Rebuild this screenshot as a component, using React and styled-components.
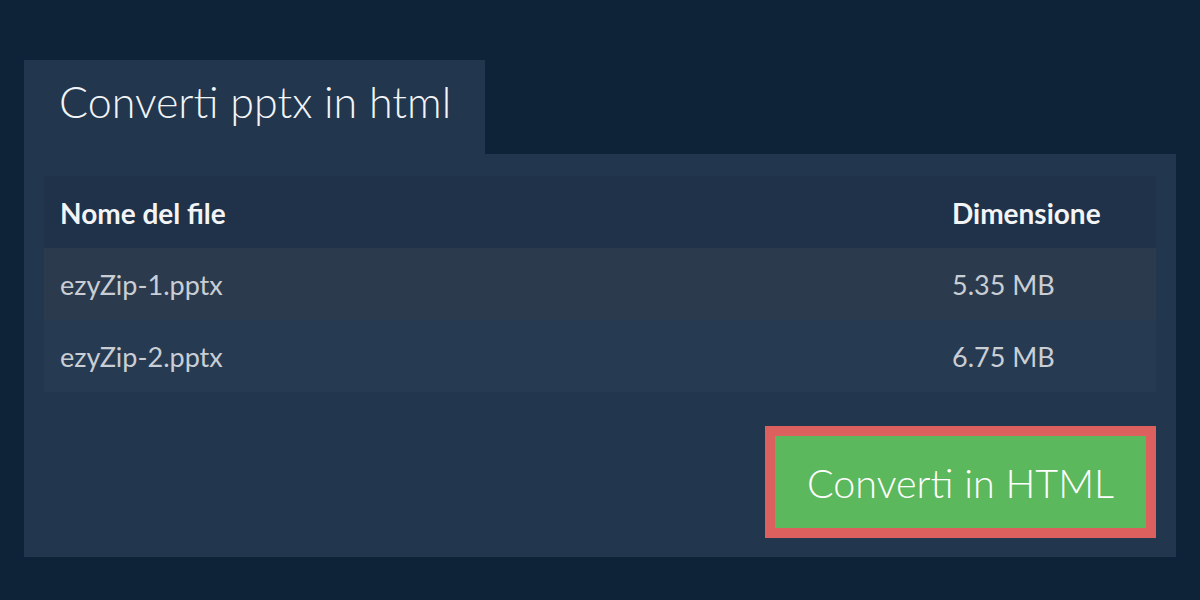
import React from 'react';
import styled, { createGlobalStyle } from 'styled-components';

const GlobalStyle = createGlobalStyle`
  html, body {
    margin: 0;
    padding: 0;
    background: #0f2338;
    font-family: Lato, "Open Sans", "Liberation Sans", sans-serif;
  }
  * {
    box-sizing: border-box;
  }
`;

const Page = styled.div`
  width: 1200px;
  height: 600px;
  padding: 60px 24px 0;
  background: #0f2338;
`;

const Tab = styled.div`
  width: 461px;
  height: 94px;
  padding: 15px 0 0 35px;
  background: #22364e;
  color: #f2f4f6;
  font-size: 43px;
  font-weight: 300;
  line-height: 54px;
  white-space: nowrap;
`;

const Panel = styled.div`
  display: flex;
  flex-direction: column;
  align-items: flex-end;
  gap: 34px;
  padding: 22px 20px 19px;
  background: #22364e;
`;

const Table = styled.div`
  width: 100%;
  display: flex;
  flex-direction: column;
`;

const Row = styled.div`
  display: grid;
  grid-template-columns: 1fr 188px;
  align-items: center;
  height: 72px;
  padding: 0 16px;
  background: ${p => p.$bg};
  color: ${p => (p.$head ? '#f2f4f6' : '#c9ced5')};
  font-size: ${p => (p.$head ? '28px' : '27px')};
  font-weight: ${p => (p.$head ? 700 : 400)};
`;

const Cell = styled.div`
  padding-top: 1px;
`;

const ConvertButton = styled.button`
  width: 391px;
  height: 112px;
  border: 10px solid #dc605e;
  background: #5cb85c;
  color: #ffffff;
  font-family: inherit;
  font-size: 39.5px;
  font-weight: 300;
  cursor: pointer;
  padding: 0;
`;

const files = [
  { name: 'ezyZip-1.pptx', size: '5.35 MB', bg: '#2b3b4d' },
  { name: 'ezyZip-2.pptx', size: '6.75 MB', bg: '#263a52' },
];

const App = () => (
  <>
    <GlobalStyle />
    <Page>
      <Tab>Converti pptx in html</Tab>
      <Panel>
        <Table>
          <Row $head $bg="#1f3249">
            <Cell>Nome del file</Cell>
            <Cell>Dimensione</Cell>
          </Row>
          {files.map(f => (
            <Row key={f.name} $bg={f.bg}>
              <Cell>{f.name}</Cell>
              <Cell>{f.size}</Cell>
            </Row>
          ))}
        </Table>
        <ConvertButton>Converti in HTML</ConvertButton>
      </Panel>
    </Page>
  </>
);

export default App;
